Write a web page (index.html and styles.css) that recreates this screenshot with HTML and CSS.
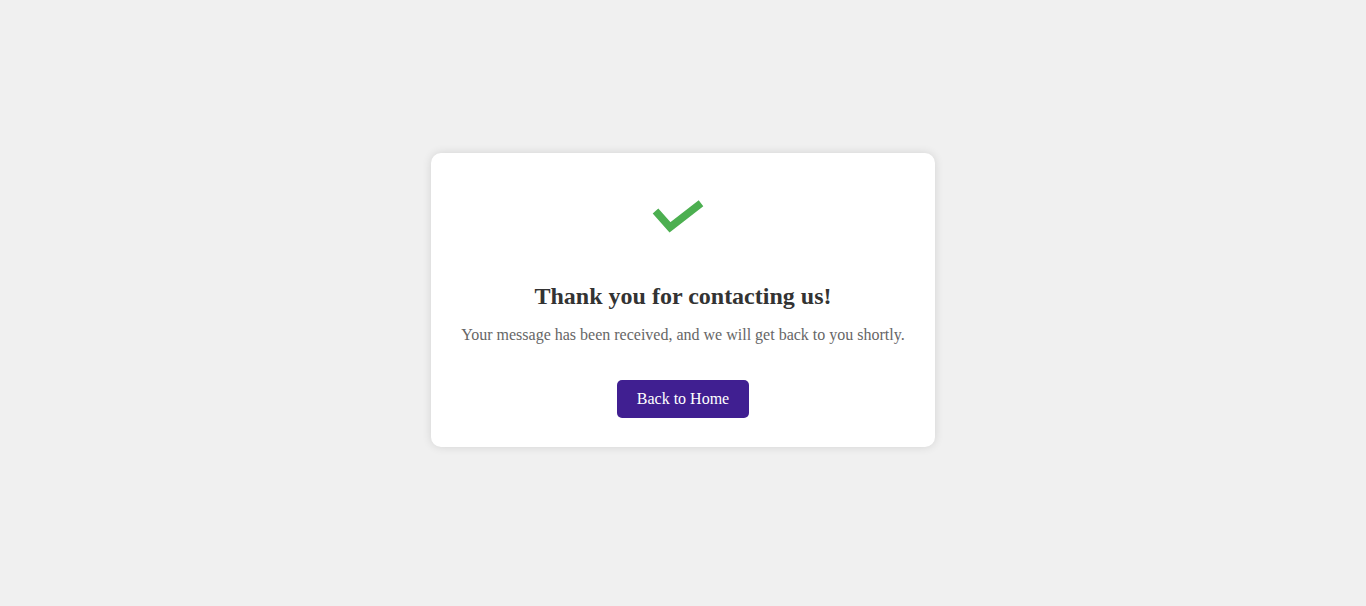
FILE: index.html
```html
<!DOCTYPE html>
<html lang="en">
<head>
<meta charset="utf-8">
<title>Thank You</title>
<link rel="stylesheet" href="styles.css">
</head>
<body>
  <div class="card">
    <div class="icon">
      <svg class="check" width="56" height="40" viewBox="0 0 56 40" aria-hidden="true">
        <polyline points="5.5,14 20,30.3 51,6.3" fill="none" stroke="#4caf50" stroke-width="7.5" stroke-linejoin="miter" stroke-linecap="butt"/>
      </svg>
    </div>
    <h2 class="title">Thank you for contacting us!</h2>
    <p class="message">Your message has been received, and we will get back to you shortly.</p>
    <a class="btn" href="#">Back to Home</a>
  </div>
</body>
</html>
```
FILE: styles.css
```css
html, body {
  margin: 0;
  padding: 0;
}
body {
  background: #f0f0f0;
  font-family: "Liberation Serif", "Times New Roman", serif;
  height: 100vh;
  box-sizing: border-box;
  padding-top: 153px;
  display: flex;
  flex-direction: column;
  align-items: center;
}
.card {
  width: 504px;
  box-sizing: border-box;
  background: #fff;
  border-radius: 10px;
  box-shadow: 0 0 10px rgba(0, 0, 0, 0.12);
  padding: 30px 20px 29px;
  display: flex;
  flex-direction: column;
  align-items: center;
  text-align: center;
}
.icon {
  height: 80px;
  width: 100%;
  display: flex;
  justify-content: center;
  align-items: flex-start;
  padding-top: 14px;
  box-sizing: border-box;
}
.check {
  display: block;
  margin-left: -10px;
}
.title {
  margin: 20px 0 0;
  font-size: 24px;
  font-weight: bold;
  color: #333;
}
.message {
  margin: 16px 0 0;
  font-size: 16px;
  color: #666;
}
.btn {
  margin-top: 36px;
  display: inline-block;
  background: #401f91;
  color: #fff;
  text-decoration: none;
  font-size: 16px;
  padding: 10px 20px;
  border-radius: 5px;
}
```
